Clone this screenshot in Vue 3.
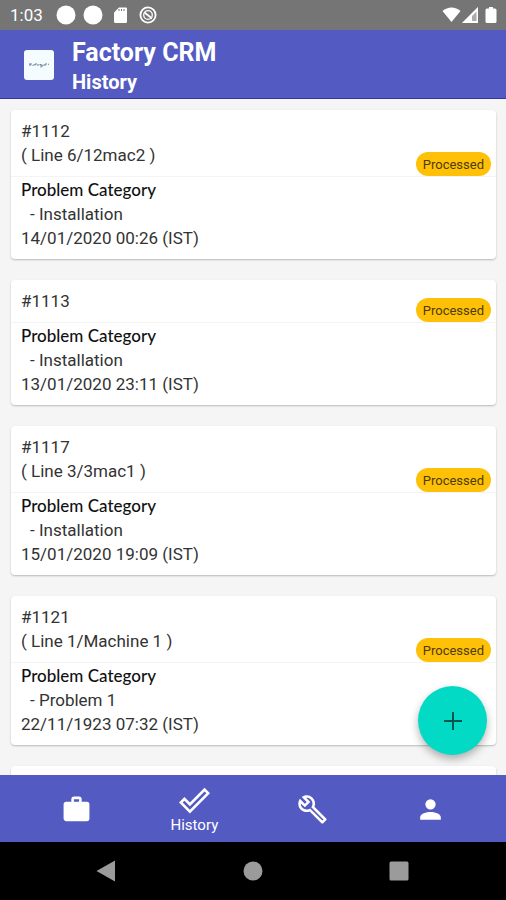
<script setup>
import { ref } from 'vue'

const tickets = [
  { id: '#1112', place: '( Line 6/12mac2 )', problem: 'Installation', date: '14/01/2020 00:26 (IST)' },
  { id: '#1113', place: '', problem: 'Installation', date: '13/01/2020 23:11 (IST)' },
  { id: '#1117', place: '( Line 3/3mac1 )', problem: 'Installation', date: '15/01/2020 19:09 (IST)' },
  { id: '#1121', place: '( Line 1/Machine 1 )', problem: 'Problem 1', date: '22/11/1923 07:32 (IST)' },
]

const tabs = [
  {
    name: 'Jobs',
    path: 'M10,2H14A2,2 0 0,1 16,4V6H20A2,2 0 0,1 22,8V19A2,2 0 0,1 20,21H4C2.89,21 2,20.1 2,19V8C2,6.89 2.89,6 4,6H8V4C8,2.89 8.89,2 10,2M14,6V4H10V6H14Z',
  },
  {
    name: 'History',
    path: 'M19.78,2.2L24,6.42L8.44,22L0,13.55L4.22,9.33L8.44,13.55L19.78,2.2M19.78,5L8.44,16.36L4.22,12.19L2.81,13.55L8.44,19.17L21.19,6.42L19.78,5Z',
  },
  {
    name: 'Service',
    path: 'M22.61,19L13.53,9.91C14.46,7.57 14,4.81 12.09,2.91C9.79,0.61 6.21,0.4 3.66,2.26L7.5,6.11L6.08,7.52L2.25,3.69C0.39,6.23 0.6,9.82 2.9,12.11C4.76,13.97 7.47,14.46 9.79,13.59L18.9,22.7C19.29,23.09 19.92,23.09 20.31,22.7L22.61,20.4C23,20 23,19.39 22.61,19M19.61,20.59L10.15,11.13C9.54,11.58 8.86,11.85 8.15,11.95C6.79,12.15 5.36,11.74 4.32,10.7C3.37,9.76 2.93,8.5 3,7.26L6.09,10.35L10.33,6.11L7.24,3C8.48,2.95 9.73,3.39 10.68,4.33C11.76,5.41 12.17,6.9 11.92,8.29C11.8,9 11.5,9.66 11.04,10.25L20.5,19.7L19.61,20.59Z',
  },
  {
    name: 'Account',
    path: 'M12,4A4,4 0 0,1 16,8A4,4 0 0,1 12,12A4,4 0 0,1 8,8A4,4 0 0,1 12,4M12,14C16.42,14 20,15.79 20,18V20H4V18C4,15.79 7.58,14 12,14Z',
  },
]
const active = ref('History')
</script>

<template>
  <div class="screen">
    <div class="status">
      <span class="clock">1:03</span>
      <svg class="dots" viewBox="0 0 102 20" aria-hidden="true">
        <circle cx="10" cy="10" r="9.5" />
        <circle cx="37" cy="10" r="9.5" />
        <path d="M63 2.5H70Q71 2.5 71 3.5V16.5Q71 18 69.5 18H59.500Q58 18 58 16.500V7.500Z" />
        <path class="notch" d="M63 4v2M65.500 4v2M68 4v2" />
        <circle class="ring" cx="92" cy="10" r="7.600" />
        <circle class="ring thin" cx="92" cy="10" r="4.300" />
        <path class="ring" d="M88.500 7.500L96 13.500" />
      </svg>
      <svg class="signals" viewBox="0 0 56 18" aria-hidden="true">
        <path d="M0.500 5C5.500 .2 13.500 .2 18.500 5L9.500 16Z" />
        <path class="faint" d="M36 1V17H20Z" />
        <path d="M36 1V17H20ZM34.500 5.500L30 10V15H34.500Z" fill-rule="evenodd" />
        <path d="M47 1h4v1.500h2q1.500 0 1.500 1.500v11.500q0 1.500-1.500 1.500h-8q-1.500 0-1.500-1.500V4q0-1.500 1.500-1.500h2Z" />
      </svg>
    </div>

    <header class="appbar">
      <span class="logo"><svg viewBox="0 0 30 30" aria-hidden="true">
        <path d="M5 14h3M6 14v2M8.500 15.500l2-1M11 15.500v-1.500h2M14 14v2M15.500 14.500h1.500v3M18 14.500v2l2-2M21 16v-2h2M24 14l1 .5" />
      </svg></span>
      <div class="titles">
        <h1>Factory CRM</h1>
        <h2>History</h2>
      </div>
    </header>

    <main class="content">
      <div class="list">
        <article v-for="t in tickets" :key="t.id" class="card">
          <div class="head">
            <div class="ident">
              <div>{{ t.id }}</div>
              <div v-if="t.place">{{ t.place }}</div>
            </div>
            <span class="badge">Processed</span>
          </div>
          <div class="body">
            <div class="label">Problem Category</div>
            <div class="problem">- {{ t.problem }}</div>
            <div>{{ t.date }}</div>
          </div>
        </article>
        <article class="card next"></article>
      </div>
      <button class="fab" type="button" aria-label="Add">
        <svg viewBox="0 0 24 24"><path d="M12 3V21M3 12H21" /></svg>
      </button>
    </main>

    <nav class="tabs">
      <button
        v-for="tab in tabs"
        :key="tab.name"
        type="button"
        class="tab"
        :aria-label="tab.name"
        @click="active = tab.name"
      >
        <svg viewBox="0 0 24 24"><path :d="tab.path" /></svg>
        <span v-if="active === tab.name">{{ tab.name }}</span>
      </button>
    </nav>

    <div class="system">
      <button type="button" aria-label="Back"><svg viewBox="0 0 22 22"><path d="M.5 11L19 .5V21.500Z" /></svg></button>
      <button type="button" aria-label="Home"><svg viewBox="0 0 22 22"><circle cx="11" cy="11" r="9.500" /></svg></button>
      <button type="button" aria-label="Recent apps"><svg viewBox="0 0 22 22"><rect x="1.500" y="1.500" width="19" height="19" rx="1.500" /></svg></button>
    </div>
  </div>
</template>

<style>
body {
  margin: 0;
}
</style>

<style scoped>
.screen {
  display: flex;
  flex-direction: column;
  height: 100vh;
  background: #f5f5f5;
  font-family: Roboto, "Liberation Sans", sans-serif;
  color: #333;
}
button {
  border: 0;
  padding: 0;
  background: none;
  font: inherit;
  color: inherit;
}
svg {
  display: block;
  fill: currentColor;
}
.status {
  flex: none;
  display: flex;
  align-items: center;
  height: 30px;
  padding: 0 8px 0 10px;
  background: #757575;
  color: #fff;
}
.clock {
  width: 46px;
  font-size: 17px;
}
.dots {
  width: 102px;
  height: 20px;
}
.notch {
  stroke: #757575;
  stroke-width: 1;
}
.ring {
  fill: none;
  stroke: currentColor;
  stroke-width: 1.8;
}
.thin {
  stroke-width: 1.3;
}
.signals {
  width: 56px;
  height: 18px;
  margin-left: auto;
}
.faint {
  opacity: 0.4;
}
.appbar {
  flex: none;
  display: flex;
  align-items: flex-start;
  gap: 18px;
  padding: 8px 24px 2px;
  border-bottom: 1px solid #2f36a6;
  background: #535ac2;
  color: #fff;
}
.logo {
  width: 30px;
  height: 30px;
  margin-top: 12px;
  border-radius: 3px;
  background: #f5fcff;
  color: #6b7a90;
}
.logo path {
  fill: none;
  stroke: currentColor;
  stroke-width: 1;
}
h1,
h2 {
  margin: 0;
  font-weight: 700;
}
h1 {
  font-size: 25px;
  line-height: 30px;
}
h2 {
  font-size: 20px;
  line-height: 28px;
}
.content {
  position: relative;
  flex: 1;
  min-height: 0;
}
.list {
  display: flex;
  flex-direction: column;
  gap: 21px;
  box-sizing: border-box;
  height: 100%;
  padding: 11px 10px 0 11px;
  overflow: hidden;
}
.card {
  flex: none;
  border-radius: 4px;
  background: #fff;
  box-shadow: 0 1px 2px rgba(0, 0, 0, 0.24);
  font-size: 17px;
  font-weight: 400;
  line-height: 24px;
}
.next {
  height: 149px;
}
.head {
  display: flex;
  align-items: flex-end;
  justify-content: space-between;
  padding: 9px 5px 0 10px;
  border-bottom: 1px solid #f4f4f4;
}
.ident {
  padding-bottom: 9px;
}
.badge {
  padding: 1px 7px 0;
  border-radius: 12px;
  background: #ffc107;
  color: #4d3b06;
  font-size: 13px;
  font-weight: 400;
  line-height: 23px;
}
.body {
  padding: 1px 10px 9px;
}
.label {
  font-family: Lato, sans-serif;
  font-weight: 500;
  color: #111;
}
.problem {
  padding-left: 9px;
}
.fab {
  position: absolute;
  right: 19px;
  bottom: 20px;
  display: grid;
  place-items: center;
  width: 69px;
  height: 69px;
  border-radius: 50%;
  background: #03dac6;
  color: #04564f;
  box-shadow: 0 4px 8px rgba(0, 0, 0, 0.3);
}
.fab svg {
  width: 24px;
  height: 24px;
}
.fab path {
  stroke: currentColor;
  stroke-width: 2;
}
.tabs {
  flex: none;
  display: grid;
  grid-template-columns: repeat(4, 1fr);
  height: 67px;
  padding: 1px 16px 0 17px;
  box-sizing: border-box;
  background: #535ac2;
  color: #fff;
}
.tab {
  display: flex;
  flex-direction: column;
  align-items: center;
  justify-content: center;
  font-size: 15px;
  line-height: 18px;
}
.tab svg {
  width: 31px;
  height: 31px;
}
.system {
  flex: none;
  display: grid;
  grid-template-columns: repeat(3, 1fr);
  place-items: center;
  height: 58px;
  padding: 0 34px;
  background: #000;
  color: #9b9b9b;
}
.system svg {
  width: 22px;
  height: 22px;
}
</style>
